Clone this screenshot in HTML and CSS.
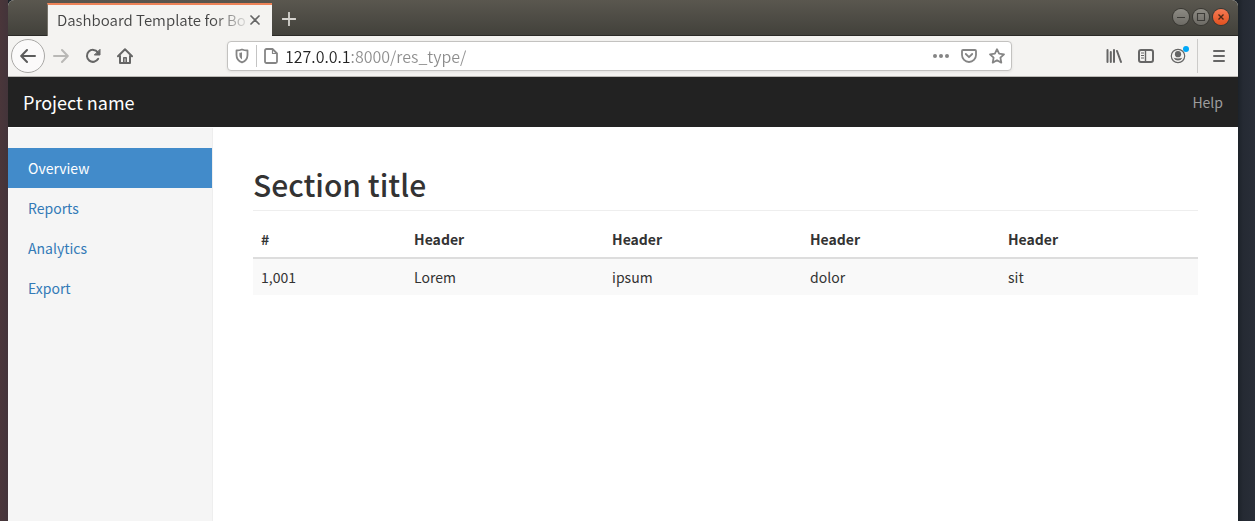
FILE: index.html
```html
<!DOCTYPE html>
<html lang="en">
<head>
<meta charset="utf-8">
<title>Dashboard Template for Bootstrap</title>
<link rel="stylesheet" href="styles.css">
</head>
<body>
<div class="window">
  <header class="titlebar">
    <div class="tab">
      <span class="tab-title">Dashboard Template for Bo</span>
      <button class="tab-close" type="button" aria-label="Close tab"><svg width="10" height="10" viewBox="0 0 10 10"><path d="M1 1l8 8M9 1l-8 8" stroke="#666" stroke-width="1.7" stroke-linecap="round"/></svg></button>
    </div>
    <button class="new-tab" type="button" aria-label="New tab"><svg width="14" height="14" viewBox="0 0 14 14"><path d="M7 .5v13M.5 7h13" stroke="#d6d4cf" stroke-width="1.8" stroke-linecap="round"/></svg></button>
    <div class="controls">
      <button class="control" type="button" aria-label="Minimize"><svg width="10" height="10" viewBox="0 0 10 10"><path d="M1 5.500h8" stroke="#3c3b37" stroke-width="1"/></svg></button>
      <button class="control" type="button" aria-label="Maximize"><svg width="10" height="10" viewBox="0 0 10 10" fill="none"><path d="M1.500 1.500h7v7h-7z" stroke="#3c3b37" stroke-width="1.100"/></svg></button>
      <button class="control control-close" type="button" aria-label="Close"><svg width="10" height="10" viewBox="0 0 10 10"><path d="M2.500 2.500l5 5M7.500 2.500l-5 5" stroke="#4a2818" stroke-width="1.400"/></svg></button>
    </div>
  </header>

  <div class="toolbar">
    <button class="tool back" type="button" aria-label="Back"><svg width="16" height="16" viewBox="0 0 16 16" fill="none" stroke="#5c5c5c" stroke-width="2" stroke-linecap="round" stroke-linejoin="round"><path d="M7 2L1.200 8 7 14M1.500 8H15"/></svg></button>
    <button class="tool" type="button" aria-label="Forward" disabled><svg width="16" height="16" viewBox="0 0 16 16" fill="none" stroke="#b9b8b6" stroke-width="2" stroke-linecap="round" stroke-linejoin="round"><path d="M9 2l5.800 6L9 14M14.500 8H1"/></svg></button>
    <button class="tool" type="button" aria-label="Reload"><svg width="16" height="16" viewBox="0 0 16 16" fill="none" stroke="#666" stroke-width="2" stroke-linecap="round"><path d="M12.800 4.300A6 6 0 1 0 13.200 10.800"/><path d="M15 1.700V7H9.700z" fill="#666" stroke-width="1" stroke-linejoin="round"/></svg></button>
    <button class="tool" type="button" aria-label="Home"><svg width="16" height="16" viewBox="0 0 16 16" fill="none" stroke="#666" stroke-width="2" stroke-linecap="round" stroke-linejoin="round"><path d="M1 8.300L8 1.300l7 7M3 8v7h10V8"/><path d="M6.800 14V9.800h2.400V14" stroke-width="1.600"/></svg></button>

    <div class="urlbar">
      <svg width="14" height="16" viewBox="0 0 14 16" fill="none" stroke="#858585" stroke-width="1.800"><path d="M7 1.500C5 2.300 3 2.500 1.500 2.500V7c0 3.600 2.200 6.200 5.500 7.300 3.300-1.100 5.500-3.700 5.500-7.300V2.500C11 2.500 9 2.300 7 1.500z" stroke-linejoin="round"/><path d="M7 4.200c-1 .4-1.800.5-2.600.6V7c0 2 .9 3.500 2.600 4.400z" fill="#858585" stroke="none"/></svg>
      <span class="divider"></span>
      <svg width="14" height="16" viewBox="0 0 14 16" fill="none" stroke="#858585" stroke-width="1.800" stroke-linejoin="round"><path d="M2.500 1H8.500L13 5.500V13.500a1.500 1.500 0 0 1-1.500 1.500H2.500A1.500 1.500 0 0 1 1 13.500V2.500A1.500 1.500 0 0 1 2.500 1z"/><path d="M8.500 1v4.500H13" stroke-width="1.200"/></svg>
      <input class="address" type="text" aria-label="Address" value="127.0.0.1:8000/res_type/">
      <div class="page-actions">
        <button class="action" type="button" aria-label="Page actions"><svg width="16" height="16" viewBox="0 0 16 16" fill="#858585"><circle cx="2" cy="8" r="2"/><circle cx="8" cy="8" r="2"/><circle cx="14" cy="8" r="2"/></svg></button>
        <button class="action" type="button" aria-label="Save to Pocket"><svg width="16" height="16" viewBox="0 0 16 16" fill="none" stroke="#858585" stroke-width="1.800" stroke-linecap="round" stroke-linejoin="round"><path d="M2 2h12a1 1 0 0 1 1 1v4a7 7 0 0 1-14 0V3a1 1 0 0 1 1-1z"/><path d="M4.800 6L8 9.200 11.200 6"/></svg></button>
        <button class="action" type="button" aria-label="Bookmark this page"><svg width="16" height="16" viewBox="0 0 16 16" fill="none" stroke="#858585" stroke-width="1.800" stroke-linejoin="round"><path d="M8 1.200l2.100 4.500 4.900.6-3.600 3.400.9 4.900L8 12.200l-4.300 2.400.9-4.900L1 6.300l4.900-.6z"/></svg></button>
      </div>
    </div>

    <div class="tools-end">
      <button class="tool" type="button" aria-label="Library"><svg width="16" height="16" viewBox="0 0 16 16" stroke="#666" stroke-width="2" stroke-linecap="round"><path d="M1.500 2v12M4.800 4v10M8 2v12M11 3l4 11"/></svg></button>
      <button class="tool" type="button" aria-label="Sidebars"><svg width="16" height="16" viewBox="0 0 16 16" fill="none" stroke="#666"><rect x="1" y="2" width="14" height="12" rx="2" stroke-width="2"/><path d="M7.500 2v12" stroke-width="1.400"/><path d="M3 5h3M3 7.500h3M3 10h3" stroke-width="1"/></svg></button>
      <button class="tool account" type="button" aria-label="Account"><svg width="16" height="16" viewBox="0 0 16 16"><circle cx="8" cy="8" r="6.700" fill="none" stroke="#666" stroke-width="1.200"/><circle cx="8" cy="6.200" r="3.100" fill="#666"/><path d="M3.600 9.800q4.400 1.400 8.800 0a4.900 4.900 0 0 1-8.800 0z" fill="#666"/></svg><span class="badge"></span></button>
      <button class="tool menu" type="button" aria-label="Open menu"><svg width="16" height="16" viewBox="0 0 16 16" stroke="#666" stroke-width="2" stroke-linecap="round"><path d="M3 3h10M3 8h10M3 13h10"/></svg></button>
    </div>
  </div>

  <nav class="navbar">
    <a class="brand" href="#">Project name</a>
    <a class="help" href="#">Help</a>
  </nav>

  <div class="page">
    <nav class="sidebar">
      <a class="side-link active" href="#">Overview</a>
      <a class="side-link" href="#">Reports</a>
      <a class="side-link" href="#">Analytics</a>
      <a class="side-link" href="#">Export</a>
    </nav>
    <main class="main">
      <h2 class="section-title">Section title</h2>
      <table class="table">
        <thead><tr><th>#</th><th>Header</th><th>Header</th><th>Header</th><th>Header</th></tr></thead>
        <tbody><tr><td>1,001</td><td>Lorem</td><td>ipsum</td><td>dolor</td><td>sit</td></tr></tbody>
      </table>
    </main>
  </div>
</div>
</body>
</html>
```
FILE: styles.css
```css
* { box-sizing: border-box; }

body {
  display: flex;
  min-height: 100vh;
  margin: 0;
  padding: 0 17px 0 8px;
  background: linear-gradient(90deg, #4a363a 0, #43343a 8px, transparent 8px),
    linear-gradient(270deg, #292e38 0, #252a33 12px, #1c2229 17px, #1c2229 100%);
  color: #333;
  font-family: "Noto Sans CJK SC", "Noto Sans", sans-serif;
  font-size: 14px;
  line-height: 20px;
}

button {
  display: flex;
  align-items: center;
  justify-content: center;
  margin: 0;
  padding: 0;
  border: 0;
  background: none;
}

svg { display: block; flex: none; }
a { text-decoration: none; }

.window {
  display: flex;
  flex: 1;
  flex-direction: column;
  min-width: 0;
  border-radius: 6px 6px 0 0;
  background: #fff;
  overflow: hidden;
}

.titlebar {
  display: flex;
  align-items: flex-end;
  height: 36px;
  padding: 0 9px 0 39px;
  background: linear-gradient(#5a574f, #42413b 35px, #2b2a27 35px);
}

.tab {
  display: flex;
  align-items: center;
  width: 225px;
  height: 33px;
  padding: 0 12px 2px 9px;
  border-top: 2px solid #ee8358;
  border-left: 1px solid #77746c;
  background: #f4f3f1;
}

.tab-title {
  flex: 1;
  color: #444;
  font-size: 15px;
  font-weight: 350;
  white-space: nowrap;
  -webkit-mask-image: linear-gradient(90deg, #000 156px, transparent 194px);
  mask-image: linear-gradient(90deg, #000 156px, transparent 194px);
}

.tab-close { width: 10px; height: 20px; margin-left: 4px; }
.new-tab { width: 34px; height: 34px; }

.controls {
  display: flex;
  gap: 4px;
  align-self: flex-start;
  margin: 9px 0 0 auto;
}

.control {
  width: 16px;
  height: 16px;
  border-radius: 50%;
  background: linear-gradient(#8d8b84, #6d6b65);
  box-shadow: 0 0 0 1px #383732;
}

.control-close { background: linear-gradient(#f67a54, #e2511f); }

.toolbar {
  display: flex;
  align-items: center;
  height: 41px;
  padding: 0 3px;
  border-bottom: 1px solid #bbb9b5;
  background: #f4f3f1;
}

.tool { flex: none; width: 32px; height: 32px; }

.back {
  width: 34px;
  height: 34px;
  border: 1px solid #a9a8a6;
  border-radius: 50%;
  background: #fbfafa;
}

.urlbar {
  display: flex;
  flex: 1;
  align-items: center;
  height: 30px;
  margin: 0 86px;
  padding: 0 6px 0 7px;
  border: 1px solid #c3c2c0;
  border-radius: 4px;
  background: #fff;
  box-shadow: 0 1px 3px #00000014;
}

.divider { width: 1px; height: 22px; margin: 0 7px; background: #c4c4c4; }

.address {
  flex: 1;
  min-width: 0;
  height: 24px;
  margin-left: 7px;
  padding: 0;
  border: 0;
  outline: 0;
  background: linear-gradient(90deg, #222 65px, #8c8c8c 65px);
  -webkit-background-clip: text;
  background-clip: text;
  color: transparent;
  font: 350 16px/24px "Noto Sans CJK SC", "Noto Sans", sans-serif;
}

.page-actions { display: flex; gap: 12px; }
.action { height: 28px; }
.tools-end { display: flex; align-items: center; }
.account { position: relative; }

.badge {
  position: absolute;
  top: 6px;
  right: 5px;
  width: 6px;
  height: 6px;
  border-radius: 50%;
  background: #00a8f8;
}

.menu {
  width: 38px;
  height: 34px;
  margin-left: 3px;
  padding-left: 4px;
  border-left: 1px solid #cccbc9;
}

.navbar {
  display: flex;
  align-items: center;
  justify-content: space-between;
  height: 50px;
  padding: 0 15px;
  background: #222;
}

.brand { color: #fff; font-size: 18px; }
.help { color: #9d9d9d; }

.page { display: flex; flex: 1; }

.sidebar {
  width: 205px;
  margin-top: 1px;
  padding-top: 20px;
  border-right: 1px solid #eee;
  background: #f5f5f5;
}

.side-link { display: block; padding: 10px 20px; color: #337ab7; }
.active { background: #428bca; color: #fff; }

.main { flex: 1; min-width: 0; padding: 41px 40px 20px; }

.section-title {
  margin: 0 0 10px;
  padding-bottom: 9px;
  border-bottom: 1px solid #eee;
  font-size: 30px;
  font-weight: 500;
  line-height: 33px;
}

.table { width: 100%; border-collapse: collapse; }
.table th, .table td { width: 20.95%; padding: 8px; text-align: left; }
.table th:first-child, .table td:first-child { width: 16.2%; }
.table th { border-bottom: 2px solid #ddd; font-weight: 700; }
.table td { background: #f9f9f9; }
```
